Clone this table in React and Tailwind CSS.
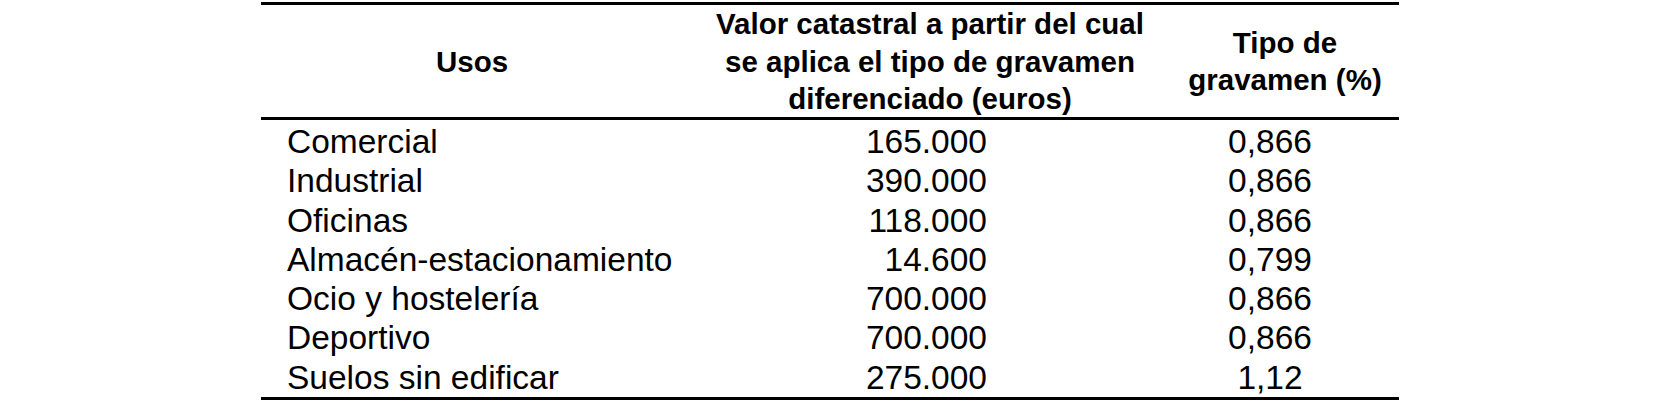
// Tabla de tipos de gravamen diferenciados por uso

const rows = [
  { uso: 'Comercial', valor: '165.000', tipo: '0,866' },
  { uso: 'Industrial', valor: '390.000', tipo: '0,866' },
  { uso: 'Oficinas', valor: '118.000', tipo: '0,866' },
  { uso: 'Almacén-estacionamiento', valor: '14.600', tipo: '0,799' },
  { uso: 'Ocio y hostelería', valor: '700.000', tipo: '0,866' },
  { uso: 'Deportivo', valor: '700.000', tipo: '0,866' },
  { uso: 'Suelos sin edificar', valor: '275.000', tipo: '1,12' },
]

export default function App() {
  return (
    <div className="w-[1664px] h-[404px] bg-white text-black font-['Liberation_Sans',Arial,sans-serif] pt-[2px]">
      <div className="ml-[261px] w-[1138px] border-t-[3px] border-b-[3px] border-black">
        <div className="grid grid-cols-[422px_494px_222px] border-b-[3px] border-black h-[115px] items-center text-[29.5px] leading-[37.5px] font-bold text-center">
          <div>Usos</div>
          <div>
            Valor catastral a partir del cual
            <br />
            se aplica el tipo de gravamen
            <br />
            diferenciado (euros)
          </div>
          <div className="pr-[6px]">
            Tipo de
            <br />
            gravamen (%)
          </div>
        </div>
        <div className="pt-[2px] text-[33.5px] leading-[39.3px]">
          {rows.map((r) => (
            <div key={r.uso} className="grid grid-cols-[422px_494px_222px]">
              <div className="pl-[26px]">{r.uso}</div>
              <div className="text-right pr-[190px]">{r.valor}</div>
              <div className="text-center pr-[36px]">{r.tipo}</div>
            </div>
          ))}
        </div>
      </div>
    </div>
  )
}
